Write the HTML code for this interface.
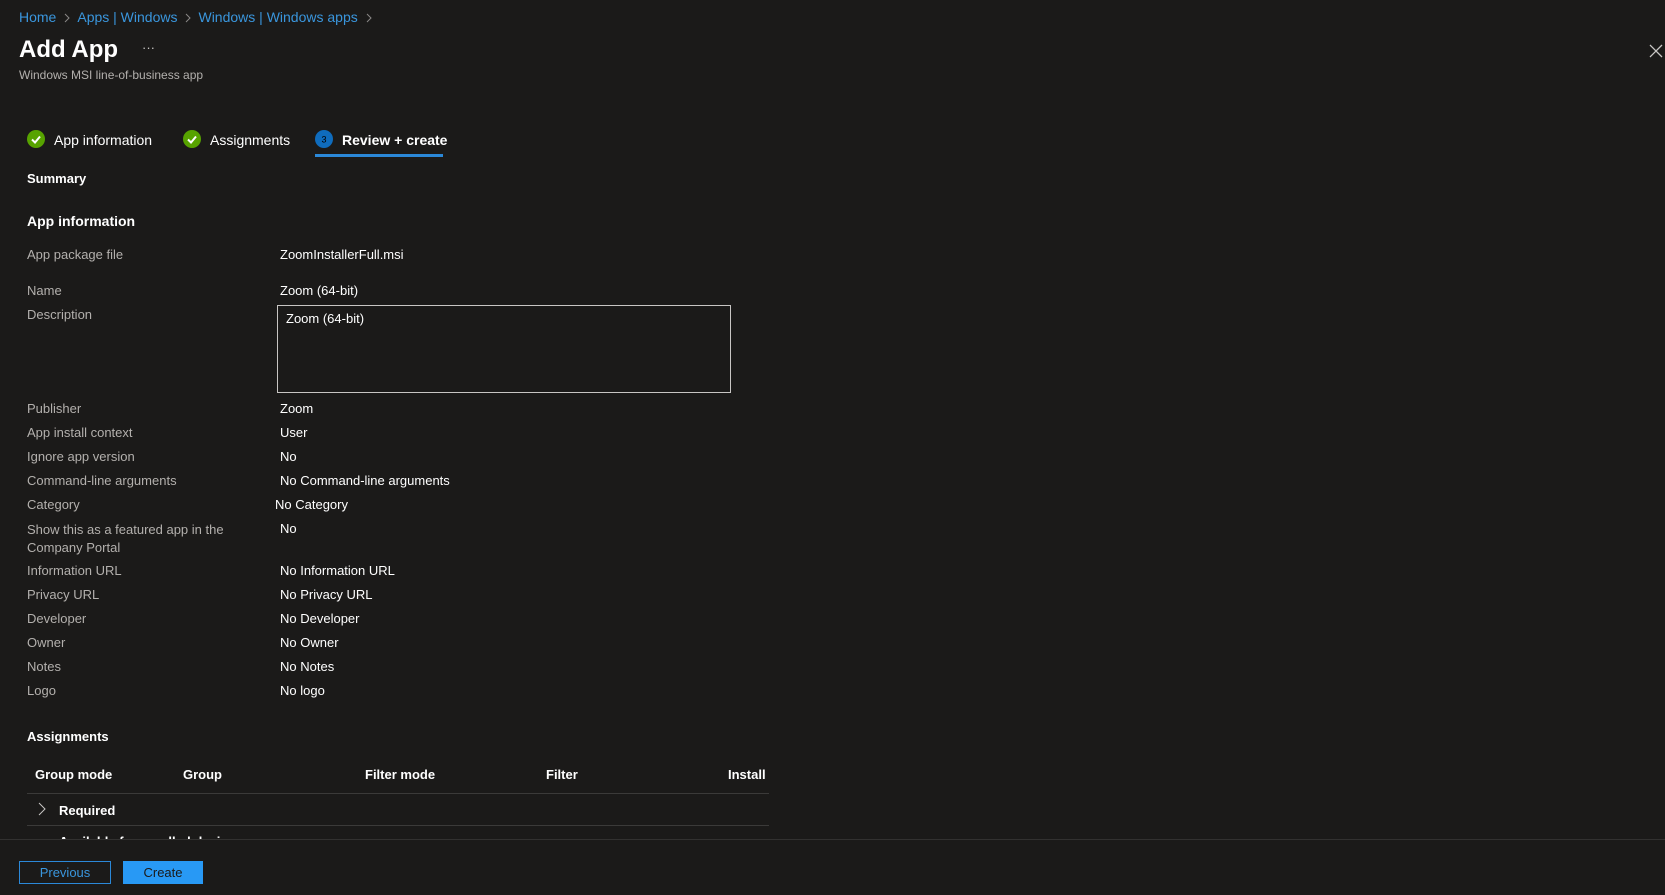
<!DOCTYPE html>
<html><head><meta charset="utf-8"><style>
*{box-sizing:border-box;margin:0;padding:0}
body{width:1665px;height:895px;background:#1b1a19;color:#fff;font-family:"Liberation Sans",sans-serif;font-size:13px;position:relative;overflow:hidden}
.a{position:absolute;white-space:nowrap}
.bc{color:#3a96dd;font-size:14px;top:9px;left:19px}
.bc svg{margin:0 7px 0 8px;vertical-align:-1px}
.lbl{color:#b3b0ad;left:27px}
.val{left:280px}
.h{font-weight:bold;left:27px}
.th{font-weight:bold;top:767px}
</style></head><body>
<div class="a bc">Home<svg width="6" height="10"><path d="M1 1l4 4-4 4" stroke="#8a8886" fill="none"/></svg>Apps | Windows<svg width="6" height="10"><path d="M1 1l4 4-4 4" stroke="#8a8886" fill="none"/></svg>Windows | Windows apps<svg width="6" height="10"><path d="M1 1l4 4-4 4" stroke="#8a8886" fill="none"/></svg></div>
<div class="a" style="left:19px;top:36px;font-size:24px;font-weight:bold">Add App</div>
<div class="a" style="left:142px;top:40px;color:#c8c6c4">···</div>
<div class="a" style="left:19px;top:68px;font-size:12px;color:#b3b0ad">Windows MSI line-of-business app</div>
<svg class="a" style="left:1649px;top:44px" width="14" height="14"><path d="M1 1L13 13M13 1L1 13" stroke="#c8c6c4" stroke-width="1.3"/></svg>

<svg class="a" style="left:27px;top:130px" width="18" height="18"><circle cx="9" cy="9" r="9" fill="#57a300"/><path d="M5 9.5l3 3 5-6" stroke="#fff" stroke-width="2" fill="none"/></svg>
<div class="a" style="left:54px;top:132px;font-size:14px">App information</div>
<svg class="a" style="left:183px;top:130px" width="18" height="18"><circle cx="9" cy="9" r="9" fill="#57a300"/><path d="M5 9.5l3 3 5-6" stroke="#fff" stroke-width="2" fill="none"/></svg>
<div class="a" style="left:210px;top:132px;font-size:14px">Assignments</div>
<svg class="a" style="left:315px;top:130px" width="18" height="18"><circle cx="9" cy="9" r="9" fill="#0f6cbd"/><text x="9" y="12.5" font-size="9" text-anchor="middle" fill="#000" font-family="Liberation Sans">3</text></svg>
<div class="a" style="left:342px;top:132px;font-size:14px;font-weight:bold">Review + create</div>
<div class="a" style="left:315px;top:154px;width:128px;height:3px;background:#2b88d8"></div>

<div class="a h" style="top:171px">Summary</div>
<div class="a h" style="top:213px;font-size:14px">App information</div>

<div class="a lbl" style="top:247px">App package file</div><div class="a val" style="top:247px">ZoomInstallerFull.msi</div>
<div class="a lbl" style="top:283px">Name</div><div class="a val" style="top:283px">Zoom (64-bit)</div>
<div class="a lbl" style="top:307px">Description</div>
<div class="a" style="left:277px;top:305px;width:454px;height:88px;border:1px solid #c8c6c4;padding:5px 8px">Zoom (64-bit)</div>
<div class="a lbl" style="top:401px">Publisher</div><div class="a val" style="top:401px">Zoom</div>
<div class="a lbl" style="top:425px">App install context</div><div class="a val" style="top:425px">User</div>
<div class="a lbl" style="top:449px">Ignore app version</div><div class="a val" style="top:449px">No</div>
<div class="a lbl" style="top:473px">Command-line arguments</div><div class="a val" style="top:473px">No Command-line arguments</div>
<div class="a lbl" style="top:497px">Category</div><div class="a" style="left:275px;top:497px">No Category</div>
<div class="a lbl" style="top:521px;line-height:18px">Show this as a featured app in the<br>Company Portal</div><div class="a val" style="top:521px">No</div>
<div class="a lbl" style="top:563px">Information URL</div><div class="a val" style="top:563px">No Information URL</div>
<div class="a lbl" style="top:587px">Privacy URL</div><div class="a val" style="top:587px">No Privacy URL</div>
<div class="a lbl" style="top:611px">Developer</div><div class="a val" style="top:611px">No Developer</div>
<div class="a lbl" style="top:635px">Owner</div><div class="a val" style="top:635px">No Owner</div>
<div class="a lbl" style="top:659px">Notes</div><div class="a val" style="top:659px">No Notes</div>
<div class="a lbl" style="top:683px">Logo</div><div class="a val" style="top:683px">No logo</div>

<div class="a h" style="top:729px">Assignments</div>
<div class="a th" style="left:35px">Group mode</div>
<div class="a th" style="left:183px">Group</div>
<div class="a th" style="left:365px">Filter mode</div>
<div class="a th" style="left:546px">Filter</div>
<div class="a th" style="left:728px;width:41px;overflow:hidden">Install context</div>
<div class="a" style="left:27px;top:793px;width:742px;height:1px;background:#3b3a39"></div>
<svg class="a" style="left:38px;top:802px" width="8" height="14"><path d="M1 1l6 6-6 6" stroke="#c8c6c4" fill="none"/></svg>
<div class="a" style="left:59px;top:803px;font-weight:bold">Required</div>
<div class="a" style="left:27px;top:825px;width:742px;height:1px;background:#3b3a39"></div>
<div class="a" style="left:59px;top:834px;font-weight:bold;height:5px;overflow:hidden">Available for enrolled devices</div>
<div class="a" style="left:0;top:839px;width:1665px;height:56px;background:#1b1a19;border-top:1px solid #323130"></div>
<div class="a" style="left:19px;top:861px;width:92px;height:23px;border:1px solid #2b88d8;color:#3a96dd;text-align:center;line-height:21px">Previous</div>
<div class="a" style="left:123px;top:861px;width:80px;height:23px;background:#2899f5;color:#1b1a19;text-align:center;line-height:23px">Create</div>
</body></html>
